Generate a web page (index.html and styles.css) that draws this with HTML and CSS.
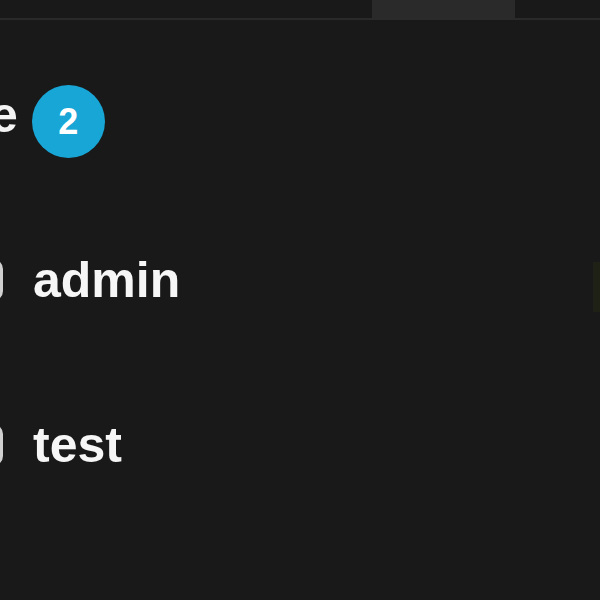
FILE: index.html
```html
<!DOCTYPE html>
<html>
<head>
<meta charset="utf-8">
<link rel="stylesheet" href="styles.css">
</head>
<body>
<div class="topbar"><div class="tab"></div></div>
<div class="content">
  <div class="title-row">
    <span class="title">e</span>
    <span class="badge">2</span>
  </div>
  <div class="user-row first">
    <span class="check"></span>
    <span class="name">admin</span>
  </div>
  <div class="user-row second">
    <span class="check"></span>
    <span class="name">test</span>
  </div>
  <div class="edge"></div>
</div>
</body>
</html>
```
FILE: styles.css
```css
html, body {
  margin: 0;
  padding: 0;
  background: #191919;
  width: 600px;
  height: 600px;
  overflow: hidden;
  font-family: "Liberation Sans", Arial, sans-serif;
}
.topbar {
  height: 18px;
  border-bottom: 2px solid #2a2a2a;
  display: flex;
}
.tab {
  margin-left: 372px;
  width: 143px;
  height: 18px;
  background: #2a2a2a;
}
.content {
  position: relative;
  display: flex;
  flex-direction: column;
  height: 580px;
}
.title-row {
  display: flex;
  align-items: flex-start;
  margin-top: 65px;
  height: 73px;
}
.title {
  font-size: 50px;
  line-height: 50px;
  font-weight: bold;
  color: #f4f4f4;
  margin-top: 5px;
  margin-left: -10px;
}
.badge {
  margin-left: 14px;
  width: 73px;
  height: 73px;
  border-radius: 50%;
  background: #18a6d6;
  color: #ffffff;
  font-weight: bold;
  font-size: 36px;
  display: flex;
  align-items: center;
  justify-content: center;
}
.user-row {
  display: flex;
  align-items: center;
  height: 50px;
}
.user-row.first { margin-top: 97px; }
.user-row.second { margin-top: 115px; }
.check {
  width: 34px;
  height: 36px;
  border: 3px solid #d0d0d0;
  border-radius: 10px;
  margin-left: -37px;
  flex: none;
}
.name {
  margin-left: 30px;
  font-size: 50px;
  line-height: 50px;
  font-weight: bold;
  color: #f6f6f6;
}
.edge {
  position: absolute;
  right: 0;
  top: 242px;
  width: 7px;
  height: 50px;
  background: #1f2117;
}
```
